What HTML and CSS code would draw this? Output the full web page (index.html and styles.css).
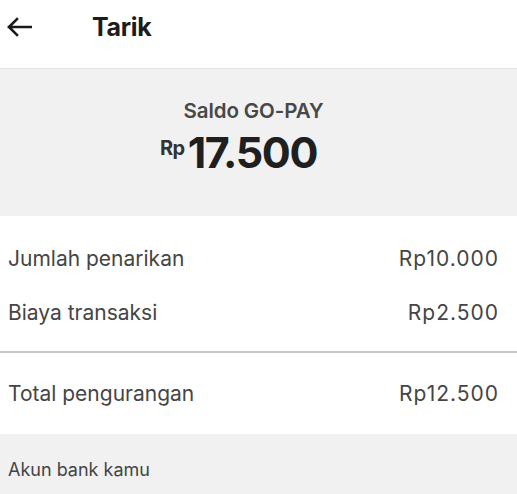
FILE: index.html
```html
<!DOCTYPE html>
<html lang="id">
<head>
<meta charset="utf-8">
<title>Tarik</title>
<link rel="stylesheet" href="styles.css">
</head>
<body>
<header class="topbar">
  <svg class="back" width="26" height="20" viewBox="0 0 26 20" aria-hidden="true">
    <path d="M25 10H3M11 2L3 10l8 8" fill="none" stroke="#1a1a1a" stroke-width="2.6" stroke-linecap="square" stroke-linejoin="miter"/>
  </svg>
  <h1 class="title">Tarik</h1>
</header>
<section class="balance">
  <div class="balance-label">Saldo GO-PAY</div>
  <div class="balance-amount"><span class="cur">Rp</span><span class="num">17.500</span></div>
</section>
<section class="rows">
  <div class="row"><span>Jumlah penarikan</span><span class="val">Rp10.000</span></div>
  <div class="row"><span>Biaya transaksi</span><span class="val">Rp2.500</span></div>
</section>
<section class="total">
  <div class="row"><span>Total pengurangan</span><span class="val">Rp12.500</span></div>
</section>
<section class="bank">
  <div class="bank-label">Akun bank kamu</div>
</section>
</body>
</html>
```
FILE: styles.css
```css
* { box-sizing: border-box; }
html, body { margin: 0; padding: 0; background: #f1f1f1; }
body { font-family: Inter, Roboto, "Noto Sans", sans-serif; color: #444; width: 517px; height: 494px; overflow: hidden; }
.topbar { height: 69px; background: #fff; border-bottom: 1px solid #e4e4e4; display: flex; align-items: center; padding: 0 0 14px 6px; }
.back { display: block; }
.title { margin: 0 0 0 60px; font-size: 25px; font-weight: 700; color: #1c1c1c; letter-spacing: -0.3px; }
.balance { height: 147px; background: #f1f1f1; display: flex; flex-direction: column; align-items: center; padding-top: 30px; }
.balance-label { font-size: 20.5px; font-weight: 600; color: #484848; line-height: 24px; margin-right: 10px; letter-spacing: -0.1px; }
.balance-amount { display: flex; align-items: flex-start; margin-top: 6px; margin-right: 40px; }
.cur { font-size: 20px; font-weight: 700; color: #333; margin-top: 7px; margin-right: 3px; letter-spacing: -0.5px; }
.num { font-size: 43px; font-weight: 700; color: #1f1f1f; line-height: 46px; letter-spacing: -1.4px; }
.rows { background: #fff; padding-top: 15px; border-bottom: 2px solid #c8c8c8; height: 137px; }
.row { display: flex; justify-content: space-between; align-items: center; height: 54px; padding: 0 19px 0 8px; font-size: 21px; color: #454545; }
.val { letter-spacing: 1px; margin-right: -1px; }
.total { background: #fff; height: 81px; padding-top: 13px; }
.bank { background: #f1f1f1; padding: 25px 0 0 8px; }
.bank-label { font-size: 18px; color: #444; }
```
